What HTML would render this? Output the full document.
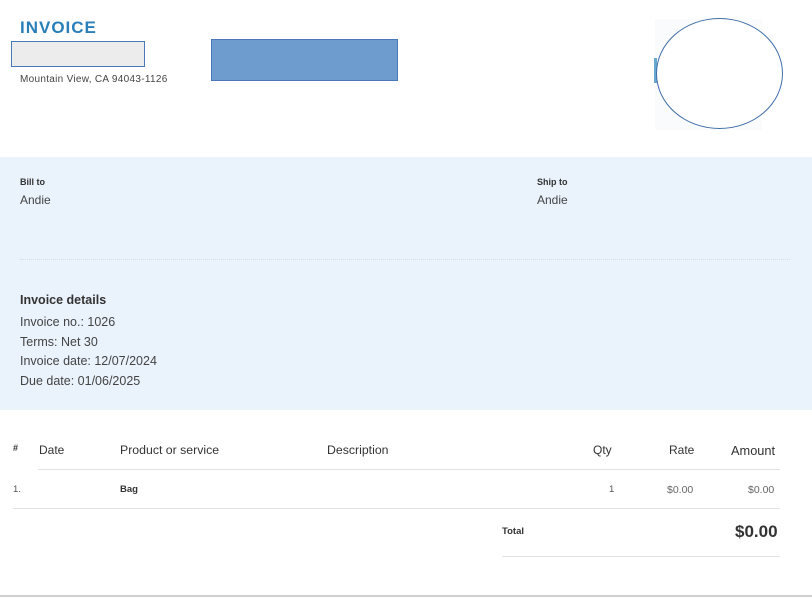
<!DOCTYPE html>
<html><head><meta charset="utf-8"><style>
body{margin:0;width:812px;height:604px;position:relative;background:#fff;font-family:"Liberation Sans",sans-serif;color:#333;overflow:hidden}
.a{position:absolute;white-space:nowrap}
</style></head><body>
<div class="a" style="left:20px;top:18px;font-size:17px;font-weight:bold;color:#2a7fb8;letter-spacing:1px">INVOICE</div>
<div class="a" style="left:11px;top:41px;width:134px;height:26px;background:#ececec;border:1.5px solid #4a78b8;box-sizing:border-box"></div>
<div class="a" style="left:20px;top:74px;font-size:10px;letter-spacing:0.3px;color:#444">Mountain View, CA 94043-1126</div>
<div class="a" style="left:211px;top:39px;width:187px;height:42px;background:#6e9ccf;border:1.5px solid #4a78b8;box-sizing:border-box"></div>
<div class="a" style="left:655px;top:19px;width:107px;height:111px;background:#fafbfc"></div>
<div class="a" style="left:654px;top:58px;width:3px;height:25px;background:#6aa9cf"></div>
<div class="a" style="left:656px;top:18px;width:127px;height:111px;border:1.5px solid #3f6ea8;border-radius:50%;box-sizing:border-box;background:#fff"></div>
<div class="a" style="left:0;top:157px;width:812px;height:253px;background:#eaf2fb"></div>
<div class="a" style="left:20px;top:177px;font-size:9px;font-weight:bold">Bill to</div>
<div class="a" style="left:20px;top:193px;font-size:12px;color:#444">Andie</div>
<div class="a" style="left:537px;top:177px;font-size:9px;font-weight:bold">Ship to</div>
<div class="a" style="left:537px;top:193px;font-size:12px;color:#444">Andie</div>
<div class="a" style="left:20px;top:259px;width:770px;border-top:1px dotted #d4dce6"></div>
<div class="a" style="left:20px;top:293px;font-size:12.5px;font-weight:bold">Invoice details</div>
<div class="a" style="left:20px;top:313px;font-size:12.5px;line-height:19.5px;color:#444">Invoice no.: 1026<br>Terms: Net 30<br>Invoice date: 12/07/2024<br>Due date: 01/06/2025</div>
<div class="a" style="left:13px;top:443px;font-size:9px;font-weight:bold">#</div>
<div class="a" style="left:39px;top:443px;font-size:12px">Date</div>
<div class="a" style="left:120px;top:443px;font-size:12.3px">Product or service</div>
<div class="a" style="left:327px;top:443px;font-size:12.3px">Description</div>
<div class="a" style="left:593px;top:443px;font-size:12px">Qty</div>
<div class="a" style="left:669px;top:443px;font-size:12px">Rate</div>
<div class="a" style="left:731px;top:443px;font-size:12.8px">Amount</div>
<div class="a" style="left:38px;top:469px;width:742px;border-top:1px solid #e3e3e3"></div>
<div class="a" style="left:13px;top:484px;font-size:9.5px;color:#555">1.</div>
<div class="a" style="left:120px;top:484px;font-size:9.5px;font-weight:bold">Bag</div>
<div class="a" style="left:609px;top:484px;font-size:9.5px;color:#555">1</div>
<div class="a" style="left:667px;top:484px;font-size:10.5px;color:#666">$0.00</div>
<div class="a" style="left:748px;top:484px;font-size:10.5px;color:#666">$0.00</div>
<div class="a" style="left:13px;top:508px;width:767px;border-top:1px solid #e3e3e3"></div>
<div class="a" style="left:502px;top:526px;font-size:9.5px;font-weight:bold">Total</div>
<div class="a" style="left:735px;top:522px;font-size:17px;font-weight:bold">$0.00</div>
<div class="a" style="left:502px;top:556px;width:278px;border-top:1px solid #e3e3e3"></div>
<div class="a" style="left:0;top:595px;width:812px;border-top:2px solid #d0d0d0"></div>
</body></html>
